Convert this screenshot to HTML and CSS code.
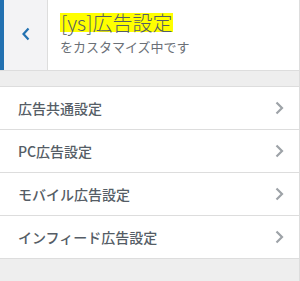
FILE: index.html
```html
<!DOCTYPE html>
<html lang="ja">
<head>
<meta charset="utf-8">
<link rel="stylesheet" href="styles.css">
</head>
<body>
<div class="panel">
  <div class="header">
    <button class="back" aria-label="戻る">
      <svg width="10" height="14" viewBox="0 0 10 14"><path d="M7.5 1.5 L2.5 7 L7.5 12.5" fill="none" stroke="#2271b1" stroke-width="2.2"/></svg>
    </button>
    <div class="notice">
      <div class="title"><span class="hl">[ys]広告設定</span></div>
      <div class="sub">をカスタマイズ中です</div>
    </div>
  </div>
  <ul class="list">
    <li class="item"><span>広告共通設定</span><svg class="chev" width="9" height="14" viewBox="0 0 9 14"><path d="M1.5 1.5 L7 7 L1.5 12.5" fill="none" stroke="#9ea3a8" stroke-width="2.2"/></svg></li>
    <li class="item"><span>PC広告設定</span><svg class="chev" width="9" height="14" viewBox="0 0 9 14"><path d="M1.5 1.5 L7 7 L1.5 12.5" fill="none" stroke="#9ea3a8" stroke-width="2.2"/></svg></li>
    <li class="item"><span>モバイル広告設定</span><svg class="chev" width="9" height="14" viewBox="0 0 9 14"><path d="M1.5 1.5 L7 7 L1.5 12.5" fill="none" stroke="#9ea3a8" stroke-width="2.2"/></svg></li>
    <li class="item"><span>インフィード広告設定</span><svg class="chev" width="9" height="14" viewBox="0 0 9 14"><path d="M1.5 1.5 L7 7 L1.5 12.5" fill="none" stroke="#9ea3a8" stroke-width="2.2"/></svg></li>
  </ul>
</div>
</body>
</html>
```
FILE: styles.css
```css
html, body {
  margin: 0;
  padding: 0;
  background: #eeeeee;
}
body {
  font-family: "Noto Sans CJK JP", "Noto Sans", sans-serif;
  color: #555d66;
}
.panel {
  width: 300px;
  height: 281px;
  box-sizing: border-box;
  border-right: 1px solid #dddddd;
}
.header {
  display: flex;
  height: 70px;
  background: #ffffff;
  border-bottom: 1px solid #dddddd;
}
.back {
  width: 48px;
  height: 70px;
  box-sizing: border-box;
  margin: 0;
  padding: 0 0 2px 0;
  border: none;
  border-left: 4px solid #2271b1;
  border-right: 1px solid #dddddd;
  background: #f3f3f5;
  display: flex;
  align-items: center;
  justify-content: center;
}
.notice {
  padding: 13px 0 0 12px;
}
.title {
  font-size: 20px;
  font-weight: 300;
  line-height: 19px;
  height: 19px;
  color: #555d66;
}
.hl {
  display: inline-block;
  background: #ffff00;
  padding: 0 1px;
  height: 19px;
  line-height: 19px;
}
.sub {
  margin-top: 7px;
  font-size: 13px;
  line-height: 16px;
  color: #6b7077;
}
.list {
  list-style: none;
  margin: 15px 0 0 0;
  padding: 0;
  border-top: 1px solid #dddddd;
}
.item {
  display: flex;
  align-items: center;
  justify-content: space-between;
  height: 42px;
  padding: 0 15px 0 18px;
  background: #ffffff;
  border-bottom: 1px solid #dddddd;
  font-size: 14px;
  font-weight: 500;
  color: #555d66;
}
.chev {
  display: block;
}
```
